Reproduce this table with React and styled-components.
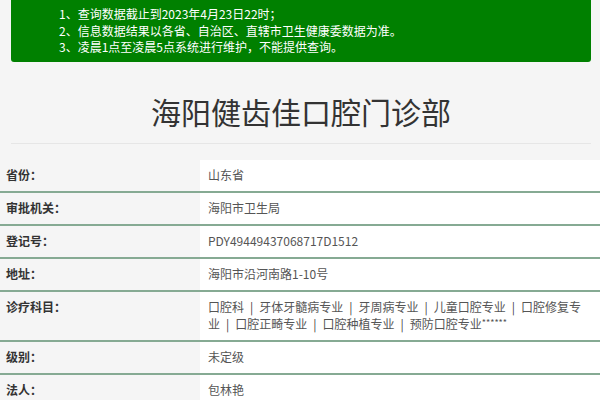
import React from 'react';
import styled, { createGlobalStyle } from 'styled-components';

const GlobalStyle = createGlobalStyle`
  html, body {
    margin: 0;
    padding: 0;
    background: #f5f5f5;
  }
  body {
    font-family: "Noto Sans CJK SC", "Noto Sans", sans-serif;
    font-size: 12px;
    color: #333;
  }
`;

const Page = styled.div`
  width: 600px;
  overflow: hidden;
`;

const Notice = styled.div`
  margin: 0 9px 0 11px;
  padding: 6px 0 6px 48px;
  background: #008000;
  color: #fff;
  border-radius: 0 0 3px 3px;
  line-height: 16.5px;
  font-size: 12px;
`;

const Title = styled.h1`
  margin: 0 9px 0 11px;
  padding: 28px 0 10px;
  border-bottom: 1px solid #e6e6e6;
  text-align: center;
  font-size: 30px;
  line-height: 43px;
  font-weight: normal;
  color: #333;
`;

const Table = styled.div`
  margin-top: 16px;
`;

const Row = styled.div`
  display: grid;
  grid-template-columns: 200px 1fr;
  border-bottom: 2px solid #86aa93;
`;

const Label = styled.div`
  padding: 7px 6px 8px;
  line-height: 16px;
  font-weight: bold;
  color: #333;
`;

const Value = styled.div`
  padding: 7px 14px 8px 8px;
  line-height: 16px;
  background: #fff;
  color: #555;
`;

const Sep = styled.span`
  margin: 0 6px;
  color: #444;
`;

const Stars = styled.span`
  font-size: 9px;
  vertical-align: 3px;
`;

const notes = [
  '1、查询数据截止到2023年4月23日22时；',
  '2、信息数据结果以各省、自治区、直辖市卫生健康委数据为准。',
  '3、凌晨1点至凌晨5点系统进行维护，不能提供查询。',
];

const subjects = ['口腔科', '牙体牙髓病专业', '牙周病专业', '儿童口腔专业', '口腔修复专业', '口腔正畸专业', '口腔种植专业', '预防口腔专业'];

const rows = [
  ['省份：', '山东省'],
  ['审批机关：', '海阳市卫生局'],
  ['登记号：', 'PDY49449437068717D1512'],
  ['地址：', '海阳市沿河南路1-10号'],
  ['诊疗科目：', 'subjects'],
  ['级别：', '未定级'],
  ['法人：', '包林艳'],
];

const Subjects = () => (
  <>
    {subjects.map((s, i) => (
      <React.Fragment key={s}>
        {i > 0 && <Sep>|</Sep>}
        {s}
      </React.Fragment>
    ))}
    <Stars>******</Stars>
  </>
);

export default function App() {
  return (
    <Page>
      <GlobalStyle />
      <Notice>
        {notes.map((n) => (
          <div key={n}>{n}</div>
        ))}
      </Notice>
      <Title>海阳健齿佳口腔门诊部</Title>
      <Table>
        {rows.map(([label, value]) => (
          <Row key={label}>
            <Label>{label}</Label>
            <Value>{value === 'subjects' ? <Subjects /> : value}</Value>
          </Row>
        ))}
      </Table>
    </Page>
  );
}
